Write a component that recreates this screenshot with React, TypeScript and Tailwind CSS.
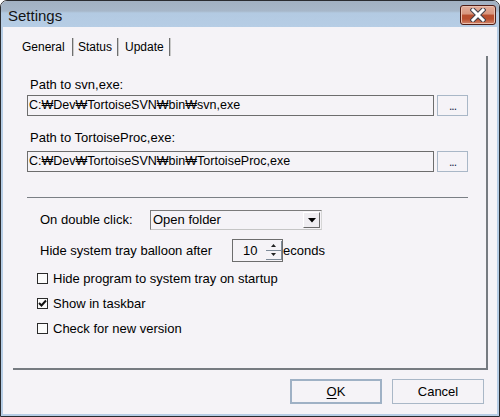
import { useState } from 'react';

/* ─── Small pieces ─── */

function CloseButton() {
  return (
    <div className="mt-[4px] mr-[3px] w-[36px] h-[20px] rounded-[3px] border border-[#4f1d16] bg-[linear-gradient(#e4ae9a_0%,#d7957e_45%,#b84f2f_50%,#b84f2f_72%,#d2866d_100%)] shadow-[inset_0_0_0_1px_#e9bfae] flex items-center justify-center">
      <svg width="16" height="14" viewBox="0 0 16 14">
        <path d="M3 2 L13 12 M13 2 L3 12" stroke="#3f3f4a" strokeWidth="5" strokeLinecap="square" />
        <path d="M3 2 L13 12 M13 2 L3 12" stroke="#ffffff" strokeWidth="3" strokeLinecap="square" />
      </svg>
    </div>
  );
}

function TabSep() {
  return <div className="w-[2px] h-[18px] border-l border-[#6f6f6f] border-r border-r-[#c9c9c9]" />;
}

function PathField({ label, value, labelTop, fieldTop }: { label: string; value: string; labelTop: string; fieldTop: string }) {
  return (
    <>
      <div className={`${labelTop} h-[16px] leading-[16px] pl-[3px] text-[13px]`}>{label}</div>
      <div className={`${fieldTop} flex gap-[3px]`}>
        <div className="w-[407px] h-[21px] border border-[#6d6d6d] pl-[1px] leading-[19px] text-[12.5px] text-black whitespace-nowrap overflow-hidden">
          {value}
        </div>
        <button className="w-[31px] h-[21px] border border-[#a9b7c7] bg-[#f5f3f7] text-[12px] leading-[19px] text-[#1b2a4a] flex items-end justify-center pb-[3px]">
          <span className="leading-none tracking-[-1px]">...</span>
        </button>
      </div>
    </>
  );
}

function CheckRow({ label, checked, onToggle }: { label: string; checked: boolean; onToggle: () => void }) {
  return (
    <div className="h-[25px] flex items-center ml-[10px] cursor-default" onClick={onToggle}>
      <div className="w-[11px] h-[11px] border border-[#2b2b2b] bg-[#fbfbfb] flex items-center justify-center">
        {checked && (
          <svg width="9" height="9" viewBox="0 0 9 9">
            <path d="M1 4 L3.5 6.5 L8 1.5" stroke="#111" strokeWidth="2" fill="none" />
          </svg>
        )}
      </div>
      <span className="ml-[5px] text-[13px] leading-[16px]">{label}</span>
    </div>
  );
}

/* ─── Component ─── */

export default function App() {
  const [hideOnStartup, setHideOnStartup] = useState(false);
  const [showInTaskbar, setShowInTaskbar] = useState(true);
  const [checkVersion, setCheckVersion] = useState(false);

  return (
    <div className="w-[500px] h-[417px] border border-[#2a2c30] rounded-t-[7px] overflow-hidden flex flex-col bg-[#f5f3f7] text-black font-['Liberation_Sans',Arial,sans-serif]">
      {/* Title bar */}
      <div className="h-[26px] shrink-0 flex items-start justify-between bg-[linear-gradient(#a2b1c2_0px,#a7b7c9_10px,#b3cae2_12px,#b6cde5_26px)]">
        <span className="ml-[7px] mt-[5px] text-[15px] leading-[20px] text-[#141414]">Settings</span>
        <CloseButton />
      </div>

      {/* Body */}
      <div className="flex-1 flex flex-col border-x-2 border-b-2 border-[#b6cde5]">
        {/* Tabs */}
        <div className="mt-[11px] h-[18px] flex items-center text-[12px] leading-[17px]">
          <span className="ml-[19px] w-[50px]">General</span>
          <TabSep />
          <span className="pl-[4px] w-[43px]">Status</span>
          <TabSep />
          <span className="pl-[6px] w-[50px]">Update</span>
          <TabSep />
        </div>

        {/* Tab panel */}
        <div className="ml-[10px] w-[475px] h-[314px] border-r-2 border-b-2 border-[#767b81] pl-[14px] flex flex-col">
          <PathField
            label="Path to svn,exe:"
            value="C:₩Dev₩TortoiseSVN₩bin₩svn,exe"
            labelTop="mt-[21px]"
            fieldTop="mt-[2px]"
          />
          <PathField
            label="Path to TortoiseProc,exe:"
            value="C:₩Dev₩TortoiseSVN₩bin₩TortoiseProc,exe"
            labelTop="mt-[14px]"
            fieldTop="mt-[5px]"
          />

          <div className="mt-[25px] w-[441px] border-t border-[#7a7f85]" />

          {/* Double click */}
          <div className="mt-[12px] h-[20px] flex items-center text-[13px]">
            <span className="ml-[13px] w-[110px]">On double click:</span>
            <div className="w-[172px] h-[20px] border-l border-t border-[#7b7b7b] border-b border-b-[#c5c5c5] border-r border-r-[#d6d6d6] flex items-stretch">
              <span className="flex-1 pl-[2px] leading-[18px]">Open folder</span>
              <div className="w-[17px] my-[1px] mr-[1px] border-t border-l border-[#ffffff] border-r border-b border-r-[#6b6b6b] border-b-[#6b6b6b] bg-[#efedf1] flex items-center justify-center">
                <svg width="8" height="5" viewBox="0 0 8 5">
                  <path d="M0 0 H8 L4 4.5 Z" fill="#000" />
                </svg>
              </div>
            </div>
          </div>

          {/* Balloon timeout */}
          <div className="mt-[9px] h-[23px] flex items-center text-[13px]">
            <span className="ml-[13px] w-[192px]">Hide system tray balloon after</span>
            <div className="w-[51px] h-[23px] border border-[#6d6d6d] flex items-stretch">
              <span className="pl-[10px] w-[33px] leading-[21px]">10</span>
              <div className="w-[16px] my-[1px] flex flex-col border-r border-b border-[#7d8a98]">
                <div className="flex-1 flex items-center justify-center border-b border-[#7d8a98]">
                  <svg width="5" height="3" viewBox="0 0 5 3">
                    <path d="M2.5 0 L5 3 H0 Z" fill="#222" />
                  </svg>
                </div>
                <div className="flex-1 flex items-center justify-center">
                  <svg width="5" height="3" viewBox="0 0 5 3">
                    <path d="M0 0 H5 L2.5 3 Z" fill="#222" />
                  </svg>
                </div>
              </div>
            </div>
            <span>econds</span>
          </div>

          {/* Options */}
          <div className="mt-[4px] flex flex-col">
            <CheckRow
              label="Hide program to system tray on startup"
              checked={hideOnStartup}
              onToggle={() => setHideOnStartup(!hideOnStartup)}
            />
            <CheckRow
              label="Show in taskbar"
              checked={showInTaskbar}
              onToggle={() => setShowInTaskbar(!showInTaskbar)}
            />
            <CheckRow
              label="Check for new version"
              checked={checkVersion}
              onToggle={() => setCheckVersion(!checkVersion)}
            />
          </div>
        </div>

        {/* Dialog buttons */}
        <div className="mt-[9px] pr-[13px] flex justify-end gap-[10px] text-[13px]">
          <button className="w-[92px] h-[25px] border-2 border-[#9fb1c5] bg-[#f5f3f7]">
            <span className="underline underline-offset-2">O</span>K
          </button>
          <button className="w-[92px] h-[25px] border border-[#a9b7c7] bg-[#f5f3f7]">Cancel</button>
        </div>
      </div>
    </div>
  );
}
